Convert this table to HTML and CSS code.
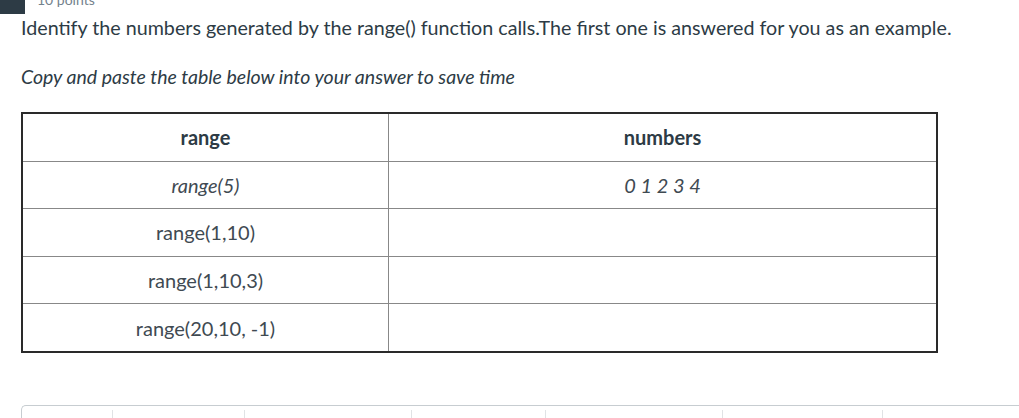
FILE: index.html
```html
<!DOCTYPE html>
<html lang="en">
<head>
<meta charset="utf-8">
<title>Question</title>
<link rel="stylesheet" href="styles.css">
</head>
<body>
<div class="question">
  <div class="qhead">
    <span class="qbadge"></span>
    <span class="qpoints">10 points</span>
  </div>
  <div class="qbody">
    <p class="prompt">Identify the numbers generated by the range() function calls.The first one is answered for you as an example.</p>
    <p class="hint">Copy and paste the table below into your answer to save time</p>
    <table class="grid">
      <tr>
        <th class="c1">range</th>
        <th class="c2">numbers</th>
      </tr>
      <tr>
        <td class="em">range(5)</td>
        <td class="em nums">0 1 2 3 4</td>
      </tr>
      <tr>
        <td>range(1,10)</td>
        <td></td>
      </tr>
      <tr>
        <td>range(1,10,3)</td>
        <td></td>
      </tr>
      <tr>
        <td>range(20,10, -1)</td>
        <td></td>
      </tr>
    </table>
    <div class="editor">
      <div class="toolbar">
        <span class="tb w1"></span>
        <span class="tb w2"></span>
        <span class="tb w3"></span>
        <span class="tb w4"></span>
        <span class="tb w5"></span>
        <span class="tb w6"></span>
        <span class="tb w7"></span>
      </div>
    </div>
  </div>
</div>
</body>
</html>
```
FILE: styles.css
```css
html, body {
  margin: 0;
  padding: 0;
  background: #ffffff;
  overflow: hidden;
}
body {
  font-family: Lato, "Open Sans", sans-serif;
  color: #2d3b45;
}
.question {
  width: 1019px;
  height: 418px;
  overflow: hidden;
}
.qhead {
  display: flex;
  align-items: center;
  height: 29px;
  margin-top: -15px;
}
.qbadge {
  width: 25px;
  height: 29px;
  background: #2d3b45;
}
.qpoints {
  margin-left: 12px;
  font-size: 14px;
  color: #73818c;
}
.qbody {
  padding-left: 21px;
}
.prompt {
  margin: 0;
  font-size: 19.7px;
  line-height: 28.5px;
}
.hint {
  margin: 20px 0 0;
  font-size: 19.5px;
  line-height: 28.5px;
  font-style: italic;
}
.grid {
  margin-top: 21px;
  width: 917px;
  border-collapse: collapse;
  border: 2px solid #2a2a2a;
}
.grid th, .grid td {
  height: 46.6px;
  padding: 0;
  text-align: center;
  border: 1px solid #888888;
  font-size: 20px;
  color: #3f4a52;
  font-weight: normal;
}
.grid th {
  font-weight: bold;
  color: #2d3b45;
}
.grid .c1 { width: 365px; }
.grid .em { font-style: italic; }
.editor {
  margin-top: 52px;
  border: 1px solid #c7cdd1;
  border-right: none;
  border-bottom: none;
  border-top-left-radius: 5px;
  height: 40px;
}
.toolbar {
  display: flex;
  padding-top: 4px;
}
.tb {
  height: 30px;
  border-right: 1px solid #e0e3e5;
}
.w1 { width: 90px; }
.w2 { width: 131px; }
.w3 { width: 166px; }
.w4 { width: 133px; }
.w5 { width: 176px; }
.w6 { width: 159px; }
.w7 { width: 120px; border-right: none; }
```
